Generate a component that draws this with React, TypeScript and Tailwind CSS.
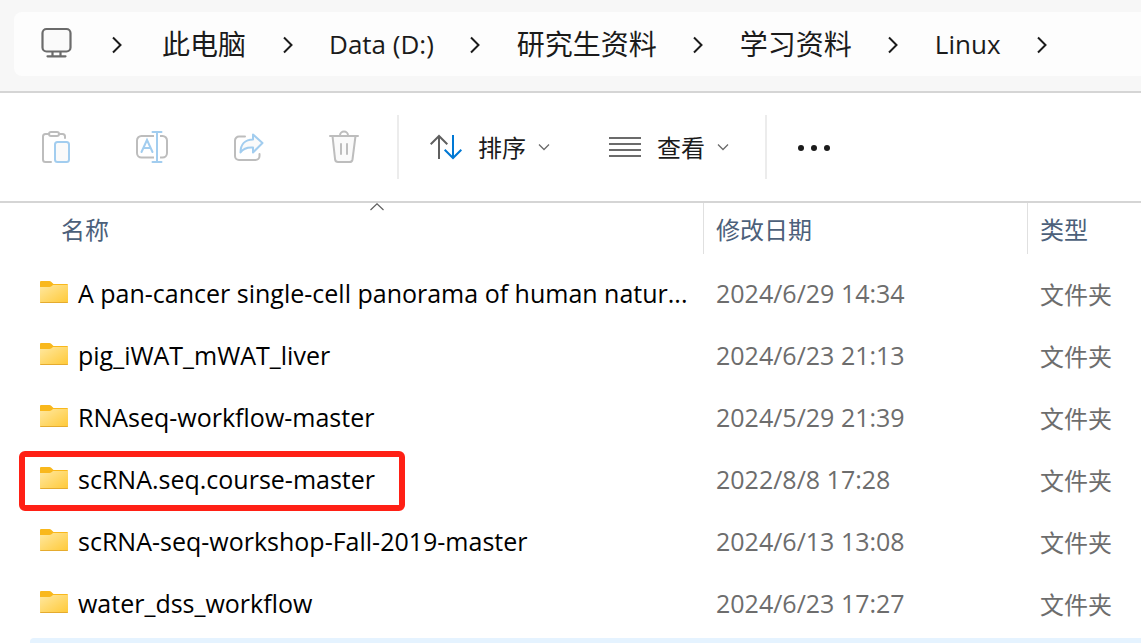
import { Fragment } from "react";

type Entry = { name: string; modified: string; kind: string; marked?: boolean };

const crumbs = [
  { label: "此电脑", size: "text-[28px]" },
  { label: "Data (D:)", size: "text-[26px]" },
  { label: "研究生资料", size: "text-[28px]" },
  { label: "学习资料", size: "text-[28px]" },
  { label: "Linux", size: "text-[26px]" },
];

const entries: Entry[] = [
  { name: "A pan-cancer single-cell panorama of human natur...", modified: "2024/6/29 14:34", kind: "文件夹" },
  { name: "pig_iWAT_mWAT_liver", modified: "2024/6/23 21:13", kind: "文件夹" },
  { name: "RNAseq-workflow-master", modified: "2024/5/29 21:39", kind: "文件夹" },
  { name: "scRNA.seq.course-master", modified: "2022/8/8 17:28", kind: "文件夹", marked: true },
  { name: "scRNA-seq-workshop-Fall-2019-master", modified: "2024/6/13 13:08", kind: "文件夹" },
  { name: "water_dss_workflow", modified: "2024/6/23 17:27", kind: "文件夹" },
];

function ComputerIcon() {
  return (
    <svg width="32" height="32" viewBox="0 0 32 32" fill="none" stroke="#6b6b6b" strokeWidth="2.2" className="mb-0.5 shrink-0">
      <rect x="2.500" y="2" width="28" height="22.500" rx="4" fill="#fafafa" />
      <path d="M12.500 25v4M20.500 25v4M7.500 29.300h18" strokeLinecap="round" />
    </svg>
  );
}

function CrumbChevron() {
  return (
    <svg width="10" height="18" viewBox="0 0 10 18" fill="none" stroke="#1b1b1b" strokeWidth="2">
      <path d="M1 1.500L8.500 9L1 16.500" />
    </svg>
  );
}

function SmallChevron() {
  return (
    <svg width="12" height="8" viewBox="0 0 12 8" fill="none" stroke="#6b6b6b" strokeWidth="1.300">
      <path d="M1 1.500L6 6.500L11 1.500" />
    </svg>
  );
}

function PasteIcon() {
  return (
    <svg width="32" height="34" viewBox="0 0 32 34" fill="none" strokeWidth="2" strokeLinecap="round">
      <path d="M9 4H5.500a2.500 2.500 0 0 0-2.500 2.500v23A2.500 2.500 0 0 0 5.500 32H11M20 4h2.500A2.500 2.500 0 0 1 25 6.500V8" stroke="#bdbdbd" />
      <rect x="9" y="2" width="10" height="4" rx="2" stroke="#bdbdbd" />
      <rect x="15" y="12" width="14" height="20" rx="2.500" fill="#fafafa" stroke="#a2cdef" />
    </svg>
  );
}

function RenameIcon() {
  return (
    <svg width="34" height="34" viewBox="0 0 34 34" fill="none" strokeWidth="2">
      <path d="M19 6H6.500A4.500 4.500 0 0 0 2 10.500v12.500A4.500 4.500 0 0 0 6.500 27.500H19M25 6h2.500A4.500 4.500 0 0 1 32 10.500v12.500a4.500 4.500 0 0 1-4.500 4.500H25" stroke="#bdbdbd" />
      <path d="M22 2v30M17.500 2h9M17.500 32h9" stroke="#a2cdef" strokeLinecap="round" />
      <path d="M6.500 22L12 10l5.500 12M8.500 18h7" stroke="#a2cdef" strokeLinecap="round" />
    </svg>
  );
}

function ShareIcon() {
  return (
    <svg width="32" height="34" viewBox="0 0 32 34" fill="none" strokeWidth="2" strokeLinecap="round" strokeLinejoin="round">
      <path d="M13 6.500H7A4 4 0 0 0 3 10.500v15.500a4 4 0 0 0 4 4h16.500a4 4 0 0 0 4-4V24" stroke="#bdbdbd" />
      <path d="M21 4.500L30.500 13L21 22.500V17.500C15 17 11 19 8.500 22.500C8.500 14.500 13 9.500 21 9.500Z" fill="#fafafa" stroke="#a2cdef" />
    </svg>
  );
}

function TrashIcon() {
  return (
    <svg width="32" height="34" viewBox="0 0 32 34" fill="none" stroke="#bdbdbd" strokeWidth="2" strokeLinecap="round">
      <path d="M4.500 6l2.600 23.500A3 3 0 0 0 10 32h11.500a3 3 0 0 0 3-2.500L27.500 6" fill="#fafafa" />
      <path d="M2 6h28M12 5.500a4 4 0 0 1 8 0M13 14v10M19 14v10" />
    </svg>
  );
}

function SortIcon() {
  return (
    <svg width="32" height="26" viewBox="0 0 32 26" fill="none" strokeWidth="2">
      <path d="M9 25V2M0.700 10.300L9 2l8.300 8.300" stroke="#5f5f5f" />
      <path d="M23 1v23M14.700 15.700L23 24l8.300-8.300" stroke="#0078d4" />
    </svg>
  );
}

function ViewIcon() {
  return (
    <svg width="32" height="22" viewBox="0 0 32 22" fill="none" stroke="#6b6b6b" strokeWidth="2">
      <path d="M0 2h32M0 8h32M0 14h32M0 20h32" />
    </svg>
  );
}

function FolderIcon() {
  return (
    <svg width="28" height="24" viewBox="0 0 28 24" className="mb-1 shrink-0">
      <defs>
        <linearGradient id="folder-front" x1="0" y1="0" x2="1" y2="1">
          <stop offset="0" stopColor="#ffe8a0" />
          <stop offset="1" stopColor="#ffc937" />
        </linearGradient>
      </defs>
      <path d="M0 2a1 1 0 0 1 1-1h8.500a2 2 0 0 1 1.400.600L13.500 4H27a1 1 0 0 1 1 1v8H0Z" fill="#f9b81c" />
      <path d="M0 7h9.500a3 3 0 0 0 2-.800L13 5h15v17a1 1 0 0 1-1 1H1a1 1 0 0 1-1-1Z" fill="url(#folder-front)" />
      <path d="M0 22h28a1 1 0 0 1-1 1H1a1 1 0 0 1-1-1Z" fill="#e5ab2e" />
    </svg>
  );
}

const tools = [
  { label: "粘贴", Icon: PasteIcon },
  { label: "重命名", Icon: RenameIcon },
  { label: "共享", Icon: ShareIcon },
  { label: "删除", Icon: TrashIcon },
];

export default function App() {
  return (
    <div className="min-h-screen overflow-hidden bg-white font-['Open_Sans','Noto_Sans_CJK_SC',sans-serif] text-black">
      <header className="border-b-2 border-[#d5d5d5] bg-[#f7f7f7] pt-3 pb-[15px] pl-3.5">
        <nav aria-label="路径" className="flex h-16 items-center rounded-l-lg bg-[#fdfdfd] pl-[26px] text-[#1b1b1b]">
          <ComputerIcon />
          <span className="flex w-[90px] shrink-0 justify-center pt-0.5">
            <CrumbChevron />
          </span>
          {crumbs.map((crumb) => (
            <Fragment key={crumb.label}>
              <a href="#" className={`whitespace-nowrap ${crumb.size}`}>{crumb.label}</a>
              <span className="flex w-[83px] shrink-0 justify-center pt-0.5">
                <CrumbChevron />
              </span>
            </Fragment>
          ))}
        </nav>
      </header>

      <div role="toolbar" className="flex h-[110px] items-center border-b-2 border-[#d5d5d5] pl-2 text-2xl text-[#1b1b1b]">
        {tools.map(({ label, Icon }) => (
          <button key={label} type="button" aria-label={label} disabled className="flex w-24 shrink-0 justify-center">
            <Icon />
          </button>
        ))}
        <div className="ml-[5px] h-16 w-0.5 shrink-0 bg-[#ececec]" />
        <button type="button" className="ml-[31px] flex shrink-0 items-center">
          <SortIcon />
          <span className="mr-3 ml-4 pt-0.5">排序</span>
          <SmallChevron />
        </button>
        <button type="button" className="ml-[59px] flex shrink-0 items-center">
          <ViewIcon />
          <span className="mr-3 ml-4 pt-0.5">查看</span>
          <SmallChevron />
        </button>
        <div className="ml-9 h-16 w-0.5 shrink-0 bg-[#ececec]" />
        <button type="button" aria-label="更多" className="ml-[31px] flex shrink-0 gap-[7px] pt-0.5">
          <span className="size-1.5 rounded-full bg-[#1b1b1b]" />
          <span className="size-1.5 rounded-full bg-[#1b1b1b]" />
          <span className="size-1.5 rounded-full bg-[#1b1b1b]" />
        </button>
      </div>

      <table className="w-full table-fixed border-collapse text-left text-[25px]">
        <colgroup>
          <col className="w-[703px]" />
          <col className="w-[324px]" />
          <col />
        </colgroup>
        <thead className="text-2xl text-[#4c607a]">
          <tr className="h-[60px] align-top">
            <th className="relative p-0 font-normal">
              <div className="flex h-[51px] items-center pt-0.5 pl-[61px]">名称</div>
              <svg width="14" height="8" viewBox="0 0 14 8" fill="none" stroke="#5f5f5f" strokeWidth="1.200" className="absolute top-0 left-[370px]">
                <path d="M0.500 7L7 0.800L13.500 7" />
              </svg>
            </th>
            <th className="p-0 font-normal">
              <div className="flex h-[51px] items-center border-l border-[#e0e0e0] pt-0.5 pl-3">修改日期</div>
            </th>
            <th className="p-0 font-normal">
              <div className="flex h-[51px] items-center border-l border-[#e0e0e0] pt-0.5 pl-3">类型</div>
            </th>
          </tr>
        </thead>
        <tbody>
          {entries.map((entry) => (
            <tr key={entry.name} className="h-[62px]">
              <td className="relative p-0 pl-10">
                <a href="#" className="flex items-center gap-2.5">
                  <FolderIcon />
                  <span className="whitespace-nowrap">{entry.name}</span>
                </a>
                {entry.marked && (
                  <div className="pointer-events-none absolute top-0.5 left-[19px] h-[60px] w-[386px] rounded-md border-6 border-[#ff2015]" />
                )}
              </td>
              <td className="p-0 pl-[13px] whitespace-nowrap text-[#6d6d6d]">{entry.modified}</td>
              <td className="p-0 pt-0.5 pl-[13px] text-2xl whitespace-nowrap text-[#6d6d6d]">{entry.kind}</td>
            </tr>
          ))}
        </tbody>
      </table>
      <div className="mt-[3px] ml-[30px] h-[5px] rounded-tl-sm bg-[#e5f3ff]" />
    </div>
  );
}
